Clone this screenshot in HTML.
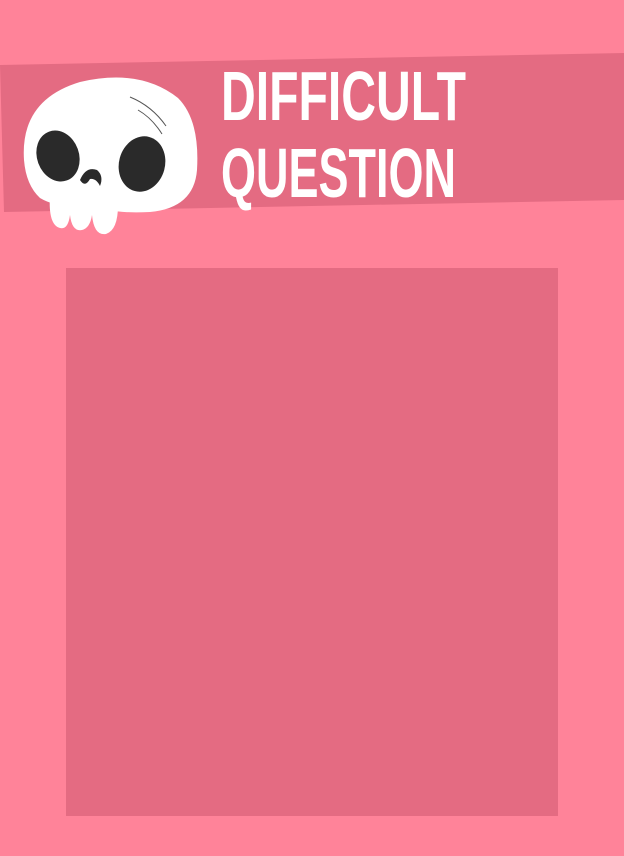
<!DOCTYPE html>
<html><head><style>
html,body{margin:0;padding:0;}
body{width:624px;height:856px;background:#FF8399;position:relative;overflow:hidden;}
svg{position:absolute;left:0;top:0;}
</style></head><body>
<svg width="624" height="856" viewBox="0 0 624 856">
<polygon points="0,65 624,53 624,200 4,212" fill="#E46B82"/>
<rect x="66" y="268" width="492" height="548" fill="#E46B82"/>
<g font-family="'Liberation Sans Narrow','Liberation Sans',sans-serif" font-weight="bold" fill="#fff" font-size="70">
<text x="221" y="120" textLength="245" lengthAdjust="spacingAndGlyphs">DIFFICULT</text>
<text x="221" y="197" textLength="235" lengthAdjust="spacingAndGlyphs">QUESTION</text>
</g>
<g>
<path d="M50,195 Q48,225 60,228 Q68,230 70,215 Q72,232 82,230 Q90,228 92,215 Q94,236 106,234 Q118,230 118,205 Z" fill="#fff"/>
<path d="M24,160 Q20,100 80,82 Q140,68 178,98 Q200,120 197,170 Q194,208 150,212 Q110,214 95,205 Q60,210 40,198 Q26,185 24,160 Z" fill="#fff"/>
<ellipse cx="58" cy="156" rx="21" ry="26" fill="#2a2a2a" transform="rotate(-20 58 156)"/>
<ellipse cx="142" cy="164" rx="23" ry="28" fill="#2a2a2a" transform="rotate(15 142 164)"/>
<path d="M80,180 Q86,166 97,170 Q104,176 100,186 Q96,178 90,179 Q85,188 80,180 Z" fill="#2a2a2a"/>
<path d="M130,97 Q152,106 166,126 M138,110 Q152,118 162,134" stroke="#555" stroke-width="1" fill="none"/>
</g>
</svg>
</body></html>
